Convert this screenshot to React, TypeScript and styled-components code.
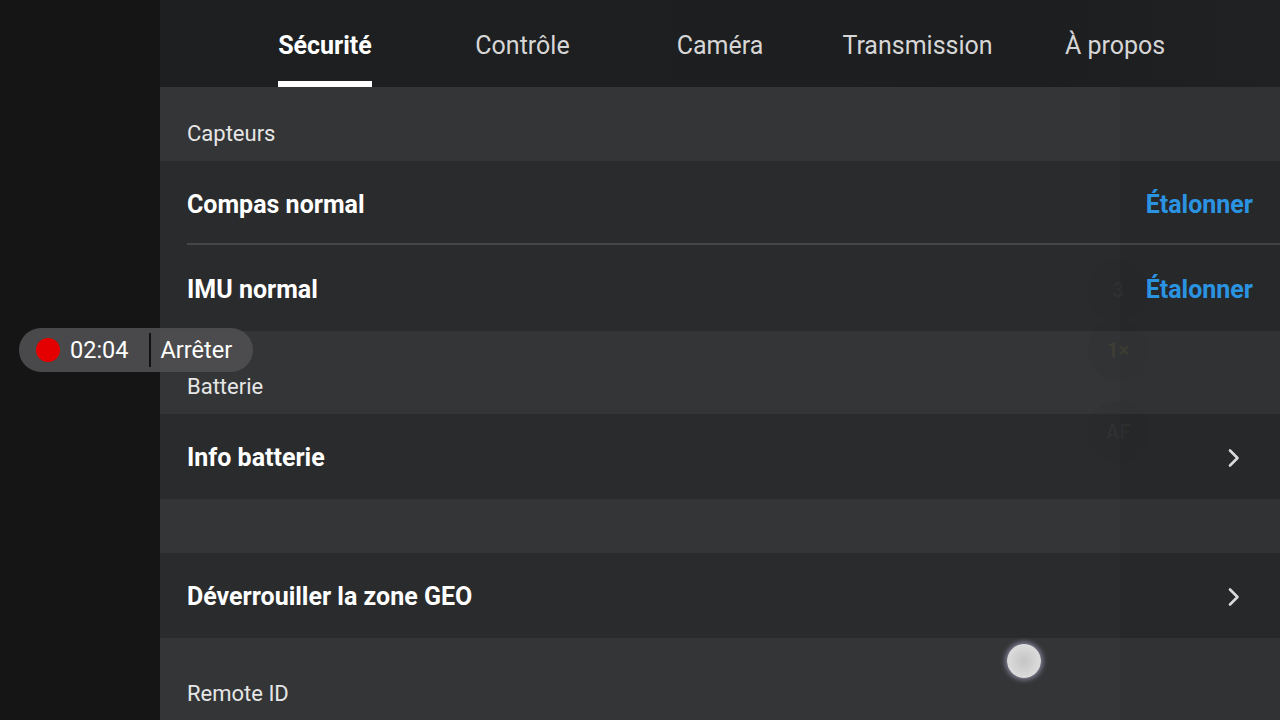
import React from "react";
import styled, { createGlobalStyle } from "styled-components";

const GlobalStyle = createGlobalStyle`
  html, body {
    margin: 0;
    padding: 0;
    background: #161616;
    font-family: Roboto, "Noto Sans", "Liberation Sans", sans-serif;
    overflow: hidden;
  }
`;

const Page = styled.div`
  position: relative;
  width: 1280px;
  height: 720px;
  display: flex;
  overflow: hidden;
  background: #161616;
`;

const LeftRail = styled.div`
  width: 160px;
  flex-shrink: 0;
  background: #151515;
`;

const Main = styled.div`
  flex: 1;
  display: flex;
  flex-direction: column;
  background: #343537;
`;

const TabBar = styled.div`
  height: 87px;
  flex-shrink: 0;
  display: flex;
  justify-content: center;
  background: linear-gradient(90deg, #1e1f21 0%, #1d1e20 80%, #202123 100%);
`;

const Tab = styled.div<{ $active?: boolean }>`
  width: 197.5px;
  display: flex;
  justify-content: center;
  align-items: stretch;
  & > span {
    position: relative;
    display: flex;
    align-items: center;
    padding-top: 3px;
    font-size: 25px;
    font-weight: ${(p) => (p.$active ? 700 : 400)};
    color: ${(p) => (p.$active ? "#ffffff" : "#d6d6d6")};
  }
  & > span::after {
    content: "";
    display: ${(p) => (p.$active ? "block" : "none")};
    position: absolute;
    left: 0;
    right: 0;
    bottom: 0;
    height: 6px;
    background: #ffffff;
  }
`;

const List = styled.div`
  flex: 1;
  display: flex;
  flex-direction: column;
  overflow: hidden;
`;

const SectionHeader = styled.div<{ $h: number }>`
  height: ${(p) => p.$h}px;
  flex-shrink: 0;
  display: flex;
  align-items: flex-end;
  padding: 0 0 14px 27px;
  box-sizing: border-box;
  font-size: 22px;
  line-height: 26px;
  color: #e6e6e6;
  background: #343537;
`;

const Row = styled.div<{ $h: number; $divider?: boolean }>`
  position: relative;
  height: ${(p) => p.$h}px;
  flex-shrink: 0;
  display: flex;
  align-items: center;
  justify-content: space-between;
  padding: 2px 27px 0;
  box-sizing: border-box;
  background: #2a2b2c;
  &::after {
    content: "";
    display: ${(p) => (p.$divider ? "block" : "none")};
    position: absolute;
    left: 27px;
    right: 0;
    bottom: 0;
    height: 2px;
    background: #454647;
  }
`;

const RowTitle = styled.span`
  font-size: 25px;
  font-weight: 700;
  color: #ffffff;
`;

const ActionLink = styled.span`
  font-size: 25px;
  font-weight: 700;
  color: #2e9cef;
`;

const Spacer = styled.div<{ $h: number }>`
  height: ${(p) => p.$h}px;
  flex-shrink: 0;
  background: #343537;
`;

const Chevron = styled.svg`
  width: 14px;
  height: 20px;
  margin-right: 12px;
`;

const RecPill = styled.div`
  position: absolute;
  left: 19px;
  top: 328px;
  height: 44px;
  width: 234px;
  box-sizing: border-box;
  border-radius: 22px;
  background: rgba(78, 78, 80, 0.92);
  display: flex;
  align-items: center;
  padding-left: 17px;
  color: #ffffff;
  font-size: 23.5px;
`;

const RecDot = styled.span`
  width: 24px;
  height: 24px;
  border-radius: 50%;
  background: #e40000;
  margin-right: 10px;
`;

const RecDivider = styled.span`
  width: 2px;
  height: 34px;
  background: #111111;
  margin: 0 10px 0 20px;
`;

const GhostColumn = styled.div`
  position: absolute;
  left: 1087px;
  top: 259px;
  width: 62px;
  display: flex;
  flex-direction: column;
  align-items: center;
  pointer-events: none;
`;

const GhostBadge = styled.div<{ $color: string; $gap: number }>`
  width: 62px;
  height: 62px;
  margin-top: ${(p) => p.$gap}px;
  border-radius: 50%;
  background: rgba(0, 0, 0, 0.02);
  display: flex;
  align-items: center;
  justify-content: center;
  font-size: 20px;
  font-weight: 700;
  color: ${(p) => p.$color};
`;

const RightShade = styled.div`
  position: absolute;
  left: 1120px;
  top: 87px;
  right: 0;
  bottom: 0;
  background: rgba(0, 0, 0, 0.05);
  pointer-events: none;
`;

const TouchDot = styled.div`
  position: absolute;
  left: 1007px;
  top: 644px;
  width: 34px;
  height: 34px;
  border-radius: 50%;
  background: radial-gradient(circle, #c4c4c4 0%, #dcdcdc 70%, #e8e8ee 100%);
  box-shadow: 0 0 5px 2px rgba(190, 190, 230, 0.55);
`;

const ChevronIcon = () => (
  <Chevron viewBox="0 0 14 20">
    <path d="M3 2.5 L10.5 10 L3 17.5" fill="none" stroke="#e6e6e6" strokeWidth="2.6" strokeLinecap="round" strokeLinejoin="round" />
  </Chevron>
);

const tabs = ["Sécurité", "Contrôle", "Caméra", "Transmission", "À propos"];

export default function App() {
  return (
    <Page>
      <GlobalStyle />
      <LeftRail />
      <Main>
        <TabBar>
          {tabs.map((t, i) => (
            <Tab key={t} $active={i === 0}>
              <span>{t}</span>
            </Tab>
          ))}
        </TabBar>
        <List>
          <SectionHeader $h={74}>Capteurs</SectionHeader>
          <Row $h={84} $divider>
            <RowTitle>Compas normal</RowTitle>
            <ActionLink>Étalonner</ActionLink>
          </Row>
          <Row $h={86}>
            <RowTitle>IMU normal</RowTitle>
            <ActionLink>Étalonner</ActionLink>
          </Row>
          <SectionHeader $h={83}>Batterie</SectionHeader>
          <Row $h={85}>
            <RowTitle>Info batterie</RowTitle>
            <ChevronIcon />
          </Row>
          <Spacer $h={54} />
          <Row $h={85}>
            <RowTitle>Déverrouiller la zone GEO</RowTitle>
            <ChevronIcon />
          </Row>
          <SectionHeader $h={83}>Remote ID</SectionHeader>
        </List>
      </Main>
      <RightShade />
      <GhostColumn>
        <GhostBadge $color="rgba(255,255,255,0.04)" $gap={0}>3</GhostBadge>
        <GhostBadge $color="rgba(200,180,60,0.09)" $gap={-2}>1×</GhostBadge>
        <GhostBadge $color="rgba(255,255,255,0.04)" $gap={20}>AF</GhostBadge>
      </GhostColumn>
      <RecPill>
        <RecDot />
        <span>02:04</span>
        <RecDivider />
        <span>Arrêter</span>
      </RecPill>
      <TouchDot />
    </Page>
  );
}
